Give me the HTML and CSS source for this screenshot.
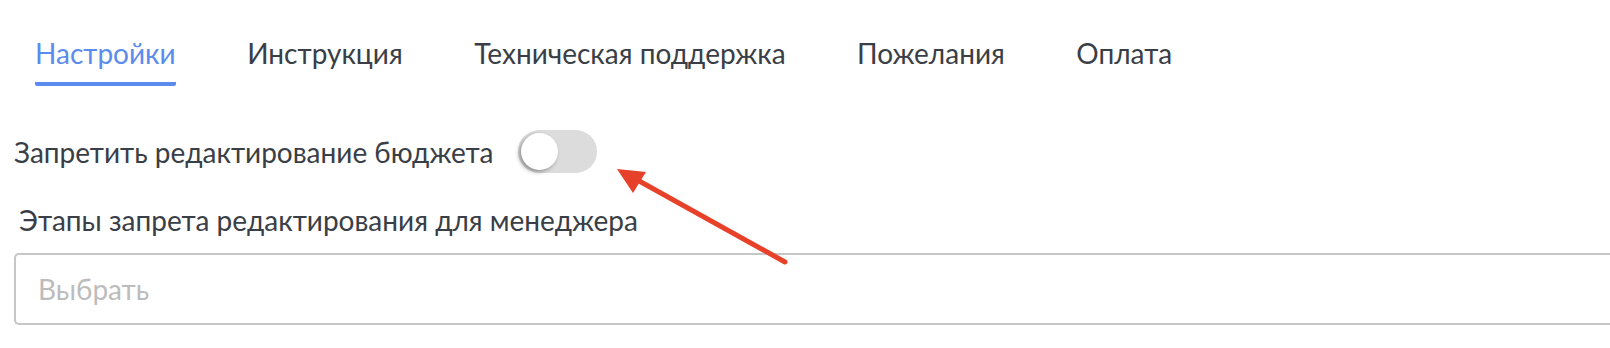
FILE: index.html
```html
<!DOCTYPE html>
<html lang="ru">
<head>
<meta charset="utf-8">
<title>Настройки</title>
<link rel="stylesheet" href="styles.css">
</head>
<body>
<div class="page">
  <nav class="tabs">
    <div class="tab active">Настройки</div>
    <div class="tab">Инструкция</div>
    <div class="tab">Техническая поддержка</div>
    <div class="tab">Пожелания</div>
    <div class="tab">Оплата</div>
  </nav>
  <div class="toggle-row">
    <span class="toggle-label">Запретить редактирование бюджета</span>
    <span class="switch"><span class="knob"></span></span>
  </div>
  <div class="field-label">Этапы запрета редактирования для менеджера</div>
  <div class="select"><span class="placeholder">Выбрать</span></div>
  <svg class="arrow" width="1610" height="348" viewBox="0 0 1610 348">
    <line x1="785" y1="262" x2="632" y2="177" stroke="#e8412a" stroke-width="5" stroke-linecap="round"/>
    <polygon points="617,169 646,172 633,193" fill="#e8412a"/>
  </svg>
</div>
</body>
</html>
```
FILE: styles.css
```css
html, body {
  margin: 0;
  padding: 0;
  background: #ffffff;
}
.page {
  position: relative;
  width: 1610px;
  height: 348px;
  overflow: hidden;
  font-family: Lato, "Noto Sans", sans-serif;
  color: #3a3e46;
}
.tabs {
  display: flex;
  gap: 71.5px;
  padding: 34px 0 0 35px;
}
.tab {
  font-size: 28px;
  line-height: 38px;
  padding-bottom: 10px;
  border-bottom: 4px solid transparent;
}
.tab.active {
  color: #5b8ced;
  border-bottom-color: #5b8ced;
  border-radius: 0 0 2px 2px;
}
.toggle-row {
  display: flex;
  align-items: center;
  gap: 25px;
  margin-top: 44px;
  padding-left: 14px;
}
.toggle-label {
  font-size: 28px;
  line-height: 38px;
}
.switch {
  display: flex;
  align-items: center;
  width: 79px;
  height: 43px;
  border-radius: 22px;
  background: #dcdcdc;
  padding-left: 3px;
  box-sizing: border-box;
}
.knob {
  width: 37px;
  height: 37px;
  border-radius: 50%;
  background: #ffffff;
  box-shadow: -2px 2px 4px rgba(0,0,0,0.35);
}
.field-label {
  margin-top: 28px;
  padding-left: 19px;
  font-size: 28px;
  line-height: 38px;
}
.select {
  margin: 14px 0 0 14px;
  height: 72px;
  border: 2px solid #c6c6c6;
  border-right: none;
  border-radius: 5px 0 0 5px;
  box-sizing: border-box;
  display: flex;
  align-items: center;
  padding-left: 22px;
}
.placeholder {
  font-size: 28px;
  color: #bcbcbc;
}
.arrow {
  position: absolute;
  left: 0;
  top: 0;
  pointer-events: none;
}
```
